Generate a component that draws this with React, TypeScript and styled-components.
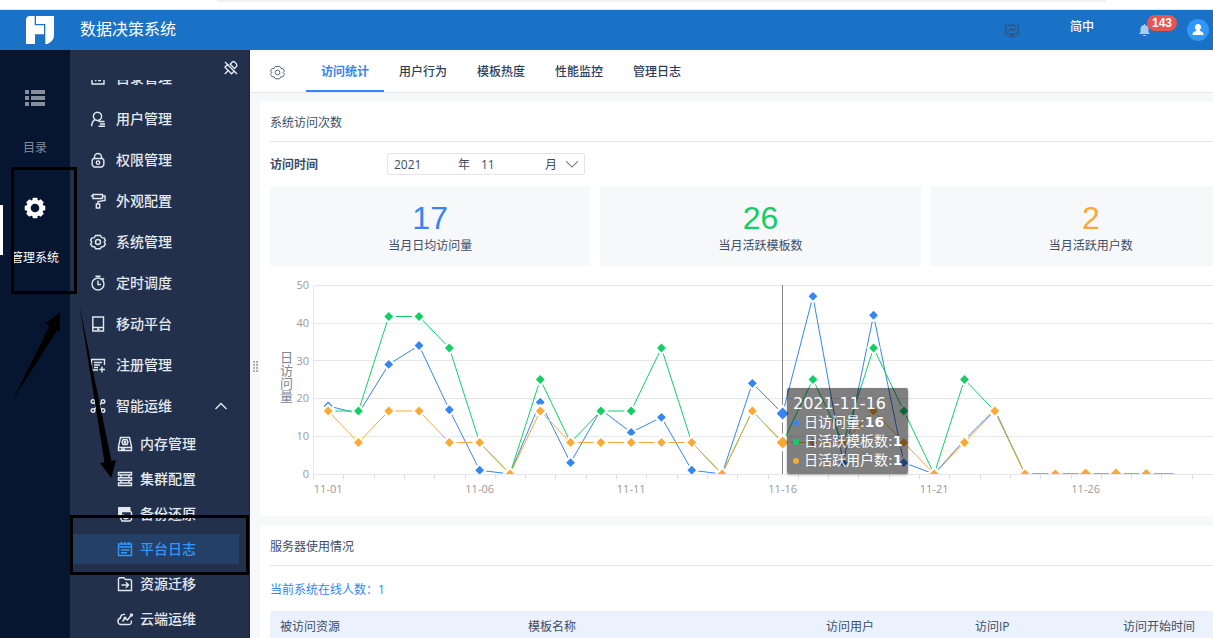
import React from "react";
import styled, { createGlobalStyle } from "styled-components";

const GlobalStyle = createGlobalStyle`
  * { box-sizing: border-box; }
  body {
    margin: 0;
    background: #ffffff;
    color: #3d4d66;
    font-family: "Open Sans", "Noto Sans CJK SC", sans-serif;
    font-size: 12px;
    line-height: 16px;
  }
  button, input { font: inherit; color: inherit; border: 0; padding: 0; background: none; }
  button { cursor: pointer; }
  a { color: inherit; text-decoration: none; }
  svg { display: block; flex: none; }
`;

const Page = styled.div`
  position: relative;
  height: 100vh;
  display: flex;
  flex-direction: column;
  overflow: hidden;
`;

const BrowserStrip = styled.div`
  flex: none;
  height: 10px;
  padding: 0 107px 0 217px;
  border-bottom: 1px solid #e1e5ea;
`;

const AddressBar = styled.div`
  height: 2px;
  background: #f1f1f2;
  border-radius: 0 0 4px 4px;
`;

const Header = styled.header`
  flex: none;
  height: 40px;
  display: flex;
  align-items: center;
  padding: 0 4px 0 26px;
  background: #1a72c7;
  color: #ffffff;
`;

const SystemName = styled.h1`
  margin: 0 auto 0 26px;
  padding-bottom: 2px;
  font-size: 16px;
  line-height: 24px;
  font-weight: 400;
`;

const HeaderButton = styled.button<{ $gap: number }>`
  position: relative;
  height: 40px;
  display: flex;
  align-items: center;
  margin-left: ${(p) => p.$gap}px;
`;

const Language = styled.span`
  padding-bottom: 6px;
  font-weight: 500;
`;

const Badge = styled.span`
  position: absolute;
  left: 8px;
  top: 5px;
  width: 30px;
  height: 16px;
  border-radius: 8px;
  background: #e8544f;
  color: #ffffff;
  font: 700 12px/16px "Liberation Sans", sans-serif;
  text-align: center;
`;

const Body = styled.div`
  flex: 1;
  min-height: 0;
  display: flex;
`;

const Rail = styled.nav`
  flex: none;
  width: 70px;
  background: #071630;
  padding-top: 36px;
`;

const RailItem = styled.a<{ $active?: boolean }>`
  position: relative;
  height: 110px;
  display: flex;
  flex-direction: column;
  align-items: center;
  gap: 30px;
  white-space: nowrap;
  color: ${(p) => (p.$active ? "#ffffff" : "#868d9b")};

  &::before {
    content: "";
    display: ${(p) => (p.$active ? "block" : "none")};
    position: absolute;
    left: 0;
    top: 9px;
    width: 3px;
    height: 50px;
    background: #ffffff;
  }
`;

const Menu = styled.nav`
  flex: none;
  width: 180px;
  display: flex;
  flex-direction: column;
  background: #22304c;
  border-right: 1px solid #1a2640;
  color: #e4e8ef;
`;

const MenuTop = styled.div`
  flex: none;
  height: 30px;
  display: flex;
  align-items: flex-start;
  justify-content: flex-end;
  padding: 10px 10px 0 0;
`;

const MenuScroll = styled.div`
  flex: 1;
  min-height: 0;
  overflow: hidden;
`;

const MenuList = styled.ul<{ $scrolled?: number }>`
  list-style: none;
  padding: 0;
  margin: ${(p) => -(p.$scrolled ?? 0)}px 0 0;
`;

const MenuItem = styled.a<{ $sub?: boolean; $active?: boolean }>`
  height: ${(p) => (p.$sub ? 35 : 41)}px;
  display: flex;
  align-items: center;
  gap: ${(p) => (p.$sub ? 7 : 10)}px;
  padding: 0 20px 0 ${(p) => (p.$sub ? 47 : 20)}px;
  font-size: 14px;
  line-height: 20px;
  font-weight: 500;
  color: ${(p) => (p.$active ? "#3296fa" : "inherit")};
  ${(p) =>
    p.$active &&
    `background: linear-gradient(#244066, #244066) 0 center / calc(100% - 10px) 30px no-repeat;`}

  span { flex: 1; }
`;

const Main = styled.main`
  position: relative;
  flex: 1;
  min-width: 0;
  overflow: hidden;
  background: #f7f8fa;
`;

const Splitter = styled.svg`
  position: absolute;
  left: 2px;
  top: 310px;
`;

const TabBar = styled.div`
  height: 43px;
  display: flex;
  padding-left: 20px;
  background: linear-gradient(#f9f9f9, #ffffff 10px);
  border-bottom: 1px solid #e6e7ea;
`;

const SettingsButton = styled.button`
  width: 36px;
  padding-top: 2px;
  color: #4f5c72;
`;

const Tab = styled.button<{ $active?: boolean }>`
  width: 78px;
  padding-top: 4px;
  font-weight: ${(p) => (p.$active ? 700 : 500)};
  color: ${(p) => (p.$active ? "#3685f2" : "#2f3e57")};
  border-bottom: 2px solid ${(p) => (p.$active ? "#3685f2" : "transparent")};
`;

const Sheet = styled.div`
  display: flex;
  flex-direction: column;
  gap: 10px;
  margin: 9px -48px 0 10px;
`;

const Panel = styled.section`
  background: #ffffff;
  padding: 0 10px 10px;
`;

const PanelTitle = styled.h2`
  height: 40px;
  margin: 0;
  font-size: 12px;
  line-height: 41px;
  font-weight: 400;
  border-bottom: 1px solid #e6e7ea;
`;

const FilterRow = styled.div`
  height: 44px;
  display: flex;
  align-items: center;
`;

const FilterName = styled.span`
  width: 117px;
  padding-top: 2px;
  font-weight: 700;
`;

const MonthPicker = styled.div`
  width: 198px;
  height: 22px;
  display: flex;
  align-items: center;
  padding: 2px 5px 0 6px;
  border: 1px solid #e2e4e8;
  border-radius: 2px;

  button {
    margin: 0 0 2px 8px;
    color: #6b7686;
  }
`;

const MonthInput = styled.input`
  width: 65px;
  min-width: 0;
  outline: none;
`;

const YearUnit = styled.label`
  flex: none;
  margin-right: 11px;
`;

const MonthUnit = styled.label`
  flex: none;
`;

const Stats = styled.div`
  display: grid;
  grid-template-columns: repeat(3, 1fr);
  gap: 10px;
`;

const Stat = styled.div`
  height: 80px;
  padding-top: 16px;
  background: #f6f8fa;
  text-align: center;
`;

const StatValue = styled.div<{ $color: string }>`
  font: 400 32px/32px "Liberation Sans", sans-serif;
  color: ${(p) => p.$color};
`;

const StatName = styled.div`
  padding-top: 4px;
`;

const ChartBox = styled.div`
  position: relative;
  margin-top: 10px;
  height: 230px;
`;

const Tooltip = styled.div`
  position: absolute;
  left: 517px;
  top: 112px;
  padding: 6px 6px 4px;
  border-radius: 2px;
  background: rgba(0, 0, 0, 0.5);
  box-shadow: 0 1px 3px rgba(0, 0, 0, 0.3);
  color: #ffffff;
  white-space: nowrap;
  font: 14px/19px "DejaVu Sans", "Noto Sans CJK SC", sans-serif;
`;

const TooltipDate = styled.div`
  font-size: 16px;
`;

const TooltipRow = styled.div<{ $color: string }>`
  display: flex;
  align-items: center;

  &::before {
    content: "";
    width: 6px;
    height: 6px;
    margin-right: 5px;
    border-radius: 3px;
    background: ${(p) => p.$color};
  }
`;

const Online = styled.p`
  height: 45px;
  margin: 0;
  line-height: 47px;
  color: #3685f2;
`;

const Table = styled.table`
  width: 100%;
  table-layout: fixed;
  border-collapse: collapse;

  th {
    height: 30px;
    padding: 2px 10px 0;
    background: #ebf2fe;
    font-weight: 400;
    text-align: left;
  }
`;

const Col = styled.col<{ $width?: number }>`
  width: ${(p) => (p.$width ? `${p.$width}px` : "auto")};
`;

const MarkBox = styled.div<{ $x: number; $y: number; $w: number; $h: number }>`
  position: absolute;
  left: ${(p) => p.$x}px;
  top: ${(p) => p.$y}px;
  width: ${(p) => p.$w}px;
  height: ${(p) => p.$h}px;
  border: 3px solid #000000;
  pointer-events: none;
`;

const MarkArrows = styled.svg`
  position: absolute;
  left: 0;
  top: 300px;
  pointer-events: none;
`;

const icons: Record<string, React.ReactNode> = {
  catalog: <path d="M2 1.500h12v12.500H2zM5 5h6M5 8h1.500M8 8h3M5 10.500h1.500M8 10.500h3" />,
  user: <path d="M5 8.600A4.100 4.100 0 1 1 10 8.600M5 8.600C2.600 10 1.700 12 1.600 15.300M5 8.600c1.500 1 3.500 1 5 0M8.500 10.500h6M10 13h5M8.500 15.200h6.500" />,
  lock: (
    <>
      <path d="M4.500 6.500V5a3.500 3.500 0 0 1 7 0v1.500M3.500 6.500h9l1.300 1.500v5l-1.800 2H4l-1.800-2V8z" />
      <circle cx="8" cy="10.700" r="1.700" />
    </>
  ),
  roller: <path d="M3 1.500h9.500v4H3zM3 3H.8M12.500 3H15v4.500L8 8.500v2.500M6.300 11h3.400v4H6.300z" />,
  gear: (
    <>
      <path d="M5.600 1.500h4.800l1.300 2.200 2.400.2 1.300 2.600L14.200 8l1.200 2-1.600 2.500-2.300.2-1.200 2H5.700l-1.200-2-2.300-.2L.6 10l1.200-2L.6 6.300 2 3.900l2.400-.2z" />
      <circle cx="8" cy="8" r="2.500" />
    </>
  ),
  clock: (
    <>
      <circle cx="8" cy="9" r="6" />
      <path d="M5.500 1.200h5M8 5.500V9.500h3M12.500 3l1.500 1.500" />
    </>
  ),
  mobile: <path d="M2.800 1h10.700v14H2.800zM2.800 11.500h10.700M7 13.300h2.500" />,
  register: <path d="M14.500 8V2.500H1.500v9l1 1.500H8M4 5.500h8M4 8h6M4 10.500h4M12 9.500v6M9.500 12.500h5.500" />,
  ops: (
    <>
      <circle cx="3" cy="3.500" r="1.800" />
      <circle cx="13" cy="3.500" r="1.800" />
      <circle cx="3" cy="12.500" r="1.800" />
      <circle cx="13" cy="12.500" r="1.800" />
      <path d="M4.500 4.800 7 8l-2.500 3.200M11.500 4.800 9 8l2.500 3.200M6.500 6.500h3M6.500 9.500h3" />
    </>
  ),
  memory: (
    <>
      <path d="M3.500 1.500h9l2 9v4h-13v-4zM1.500 11.500h13M4 13.200h4" />
      <path d="M6 3.800h4L11 6 10 8.500H6L5 6z" />
      <circle cx="8" cy="6.200" r=".8" />
    </>
  ),
  cluster: <path d="M1.500 1.500h13v2.500h-13zM1.500 6.700h13v2.500h-13zM1.500 12h13v2.500h-13zM4 4v2.700M12 4v2.700M4 9.200V12M12 9.200V12" />,
  backup: (
    <>
      <path d="M3.500 12V5.500h10l1 1v7l-1.500 1.500H5z" />
      <path d="M6.500 8.500v3h5M6.500 11.500c2 2.500 5 1 5.500-1" />
      <path d="M1.800 1.800h11v3H4.500v4H1.800z" fill="currentColor" />
    </>
  ),
  log: <path d="M1.500 3h13v11.500h-13zM1.500 6h13M4.500 1v3M8 1v3M11.500 1v3M4 9h8.500M4 11.700h6" />,
  migrate: <path d="M1.500 3V14.500h13v-10l-1-1H8.500L6.800 1.800H2.500zM4.500 9h7M8.800 6.200 11.600 9l-2.800 2.800" />,
  cloud: (
    <>
      <path d="M8 3.500C5 3 3.500 4.500 3.500 7 1.500 7.500.8 9 1 11c.2 1.700 1.500 2.500 3 2.500h8c2 0 3-2 2.200-4" />
      <path d="M5.500 10.500 8 7l2.500 2L14 4.500" />
      <circle cx="14.500" cy="4" r="1" />
      <circle cx="8" cy="7" r=".8" />
    </>
  ),
  chevronUp: <path d="M2.500 11 8 5.500l5.500 5.500" />,
  chevronDown: <path d="M1.500 5 8 11.500 14.500 5" />,
  unpin: <path d="M9.500 1.800c1-1 4.800 1.500 4.300 4.200L11.500 8.500 7.200 4.300zM6 5 3.500 5.500 2 7.200l6.500 6.600 1.800-1.600L11 10M2 2l12 12M5 10.800 1.800 14" />,
  board: <path d="M1 2.500h14v10H1zM8 .5v2M8 12.500v1.500M8 13.500 4.500 16.500M8 13.500l3.500 3M4 9.200l2.500-2.700 2.500 2L12 5.200" />,
};

function Icon({ name, size = 16, width = 1.4 }: { name: string; size?: number; width?: number }) {
  return (
    <svg width={size} height={size} viewBox="0 0 16 16" fill="none" stroke="currentColor" strokeWidth={width} overflow="visible" aria-hidden="true">
      {icons[name]}
    </svg>
  );
}

const menuItems = [
  ["catalog", "目录管理"],
  ["user", "用户管理"],
  ["lock", "权限管理"],
  ["roller", "外观配置"],
  ["gear", "系统管理"],
  ["clock", "定时调度"],
  ["mobile", "移动平台"],
  ["register", "注册管理"],
];

const subItems = [
  ["memory", "内存管理"],
  ["cluster", "集群配置"],
  ["backup", "备份还原"],
  ["log", "平台日志"],
  ["migrate", "资源迁移"],
  ["cloud", "云端运维"],
];

const tabs = ["访问统计", "用户行为", "模板热度", "性能监控", "管理日志"];

const BLUE = "#3685f2";
const GREEN = "#13ce66";
const ORANGE = "#faa937";

// Templates and users run on their own scale, on which 6 equals 50 visits.
const perUnit = 50 / 6;
const visits = [18, 16, 29, 34, 17, 1, 0, 19, 3, 17, 11, 15, 1, 0, 24, 16, 47, 3, 42, 3, 0, 9, 17, 0, 0, 0, 0, 0, 0];
const templates = [2, 2, 5, 5, 4, 1, 0, 3, 1, 2, 2, 4, 1, 0, 2, 1, 3, 1, 4, 2, 0, 3, 2, 0, 0, 0, 0, 0, 0].map((v) => v * perUnit);
const users = [2, 1, 2, 2, 1, 1, 0, 2, 1, 1, 1, 1, 1, 0, 2, 1, 1, 1, 2, 1, 0, 1, 2, 0, 0, 0, 0, 0, 0].map((v) => v * perUnit);
const hovered = 15;
const step = 30.3;
const px = (i: number) => 43 + step * (i + 0.5);
const py = (v: number) => 198 - v * 3.78;
const diamond = (x: number, y: number, r: number) => `M${x - r} ${y}L${x} ${y - r}L${x + r} ${y}L${x} ${y + r}Z`;

function markerSize(i: number) {
  if (i === hovered) return 6;
  if (i === 25 || i === 26) return 5.5;
  if (i === 27) return 5;
  if (i === 28) return 0;
  return 4.4;
}

function Series({ values, color }: { values: number[]; color: string }) {
  return (
    <g>
      <polyline points={values.map((v, i) => `${px(i)},${py(v)}`).join(" ")} fill="none" stroke={color} strokeWidth="1" />
      {values.map((v, i) => (
        <g key={i}>
          <path d={diamond(px(i), py(v), markerSize(i) + 3)} fill="#ffffff" />
          <path d={diamond(px(i), py(v), markerSize(i))} fill={color} />
        </g>
      ))}
    </g>
  );
}

function Chart() {
  return (
    <svg width="100%" height="230" viewBox="0 0 981 230" preserveAspectRatio="xMinYMin meet" fontSize="11" fill="#999999" role="img" aria-label="日访问量">
      <clipPath id="plot">
        <rect x="30" y="0" width="940" height="198" />
      </clipPath>
      {[0, 10, 20, 30, 40, 50].map((v) => (
        <g key={v}>
          <path d={`M43 ${Math.floor(py(v) + 0.3) + 0.5}H953`} stroke="#e6e7ea" />
          <text x="39" y={py(v) + 4} textAnchor="end">{v}</text>
        </g>
      ))}
      <path d="M43.500 9V198" stroke="#e6e7ea" />
      {Array.from({ length: 31 }, (_, i) => (
        <path key={i} d={`M${Math.floor(43.5 + step * i) + 0.5} 199v4`} stroke="#dcdee2" />
      ))}
      {[0, 5, 10, 15, 20, 25].map((i) => (
        <text key={i} x={px(i)} y="217" textAnchor="middle">{`11-${String(i + 1).padStart(2, "0")}`}</text>
      ))}
      <text x="16" y="75" fontSize="13" fill="#7b8698" writingMode="vertical-rl">日访问量</text>
      <path d="M512.500 9V198" stroke="#888888" />
      <g clipPath="url(#plot)">
        <Series values={visits} color={BLUE} />
        <Series values={templates} color={GREEN} />
        <Series values={users} color={ORANGE} />
        <path d={`M${px(23) + 8} 197.500H${px(27) + 21}`} stroke="#a3b767" strokeDasharray="15.300 15" />
      </g>
    </svg>
  );
}

export default function App() {
  return (
    <Page>
      <GlobalStyle />
      <BrowserStrip>
        <AddressBar />
      </BrowserStrip>
      <Header>
        <svg width="28" height="28" viewBox="0 0 28 28" fill="#ffffff" aria-hidden="true">
          <path d="M0 3Q.5.500 3 0H8.700V9.300H18V18.300H9V28H0Z" />
          <path d="M10 0H28V19Q28 25 21.500 28H19.300V8H10Z" />
        </svg>
        <SystemName>数据决策系统</SystemName>
        <HeaderButton $gap={0} aria-label="大屏">
          <svg width="14" height="15" viewBox="0 0 16 17" fill="none" stroke="#3b4a63" strokeWidth="1.200">
            {icons.board}
          </svg>
        </HeaderButton>
        <HeaderButton $gap={51}>
          <Language>简中</Language>
        </HeaderButton>
        <HeaderButton $gap={45} aria-label="消息 143">
          <svg width="11" height="12" viewBox="0 0 11 12" fill="#a8cbee">
            <path d="M5 0h1v1C8.500 1.500 9.500 3 9.500 5v3L11 10H0L1.500 8V5C1.500 3 2.500 1.500 5 1zM3.500 11h4L6.500 12h-2z" />
          </svg>
          <Badge>143</Badge>
        </HeaderButton>
        <HeaderButton $gap={37} aria-label="账号">
          <svg width="22" height="22" viewBox="0 0 22 22" fill="#ffffff">
            <circle cx="11" cy="11" r="11" fill="#3296fa" />
            <path d="M11 5a3.200 3.200 0 0 1 2 5.700c-.4.500-.2 1.300.5 1.500 2.200.600 3 1.500 3 3.800h-11c0-2.300.8-3.200 3-3.800.700-.2.900-1 .5-1.500A3.200 3.200 0 0 1 11 5z" />
          </svg>
        </HeaderButton>
      </Header>

      <Body>
        <Rail>
          <RailItem href="#catalog">
            <svg width="24" height="24" viewBox="0 0 24 24" fill="currentColor" aria-hidden="true">
              <path d="M2 4h4v4H2zM8 4h14v4H8zM2 10h4v4H2zM8 10h14v4H8zM2 16h4v4H2zM8 16h14v4H8z" />
            </svg>
            目录
          </RailItem>
          <RailItem href="#system" $active>
            <svg width="24" height="24" viewBox="-12 -12 24 24" aria-hidden="true">
              <g fill="currentColor">
                {[0, 45, 90, 135].map((a) => (
                  <rect key={a} x="-2.500" y="-10.300" width="5" height="20.600" rx="1" transform={`rotate(${a})`} />
                ))}
                <circle r="8.600" />
              </g>
              <circle r="4.300" fill="#071630" />
            </svg>
            管理系统
          </RailItem>
        </Rail>

        <Menu>
          <MenuTop>
            <button aria-label="取消固定">
              <Icon name="unpin" />
            </button>
          </MenuTop>
          <MenuScroll>
            <MenuList $scrolled={23}>
              {menuItems.map(([icon, name]) => (
                <li key={name}>
                  <MenuItem href={`#${icon}`}>
                    <Icon name={icon} />
                    <span>{name}</span>
                  </MenuItem>
                </li>
              ))}
              <li>
                <MenuItem href="#ops">
                  <Icon name="ops" />
                  <span>智能运维</span>
                  <Icon name="chevronUp" />
                </MenuItem>
                <MenuList>
                  {subItems.map(([icon, name]) => (
                    <li key={name}>
                      <MenuItem href={`#${icon}`} $sub $active={icon === "log"}>
                        <Icon name={icon} />
                        <span>{name}</span>
                      </MenuItem>
                    </li>
                  ))}
                </MenuList>
              </li>
            </MenuList>
          </MenuScroll>
        </Menu>

        <Main>
          <TabBar>
            <SettingsButton aria-label="设置">
              <Icon name="gear" width={1} size={15} />
            </SettingsButton>
            {tabs.map((name, i) => (
              <Tab key={name} $active={i === 0}>{name}</Tab>
            ))}
          </TabBar>
          <Splitter width="6" height="14" viewBox="0 0 6 14" fill="#a9adb5">
            {[1, 4, 7, 10].map((y) => (
              <path key={y} d={`M1 ${y}h2v2h-2zM4 ${y}h2v2h-2z`} />
            ))}
          </Splitter>
          <Sheet>
            <Panel>
              <PanelTitle>系统访问次数</PanelTitle>
              <FilterRow>
                <FilterName>访问时间</FilterName>
                <MonthPicker>
                  <MonthInput id="year" defaultValue="2021" />
                  <YearUnit htmlFor="year">年</YearUnit>
                  <MonthInput id="month" defaultValue="11" />
                  <MonthUnit htmlFor="month">月</MonthUnit>
                  <button aria-label="选择月份">
                    <Icon name="chevronDown" size={14} width={1.3} />
                  </button>
                </MonthPicker>
              </FilterRow>
              <Stats>
                <Stat>
                  <StatValue $color={BLUE}>17</StatValue>
                  <StatName>当月日均访问量</StatName>
                </Stat>
                <Stat>
                  <StatValue $color={GREEN}>26</StatValue>
                  <StatName>当月活跃模板数</StatName>
                </Stat>
                <Stat>
                  <StatValue $color={ORANGE}>2</StatValue>
                  <StatName>当月活跃用户数</StatName>
                </Stat>
              </Stats>
              <ChartBox>
                <Chart />
                <Tooltip>
                  <TooltipDate>2021-11-16</TooltipDate>
                  <TooltipRow $color={BLUE}>日访问量:<b>16</b></TooltipRow>
                  <TooltipRow $color={GREEN}>日活跃模板数:<b>1</b></TooltipRow>
                  <TooltipRow $color={ORANGE}>日活跃用户数:<b>1</b></TooltipRow>
                </Tooltip>
              </ChartBox>
            </Panel>

            <Panel>
              <PanelTitle>服务器使用情况</PanelTitle>
              <Online>当前系统在线人数：1</Online>
              <Table>
                <colgroup>
                  <Col $width={248} />
                  <Col $width={298} />
                  <Col $width={149} />
                  <Col $width={148} />
                  <Col />
                </colgroup>
                <thead>
                  <tr>
                    <th>被访问资源</th>
                    <th>模板名称</th>
                    <th>访问用户</th>
                    <th>访问IP</th>
                    <th>访问开始时间</th>
                  </tr>
                </thead>
              </Table>
            </Panel>
          </Sheet>
        </Main>
      </Body>

      <MarkBox $x={11} $y={167} $w={66} $h={127} />
      <MarkBox $x={70} $y={515} $w={179} $h={60} />
      <MarkArrows width="130" height="180" viewBox="0 0 130 180" fill="#000000">
        <path d="M60 12.500 45 23.500 49.500 25.800 13 99.500 57 30.500 60 32z" />
        <path d="M79.300 5 104.500 162.300 100 163 111.300 178 116 160 111.500 161z" />
      </MarkArrows>
    </Page>
  );
}
